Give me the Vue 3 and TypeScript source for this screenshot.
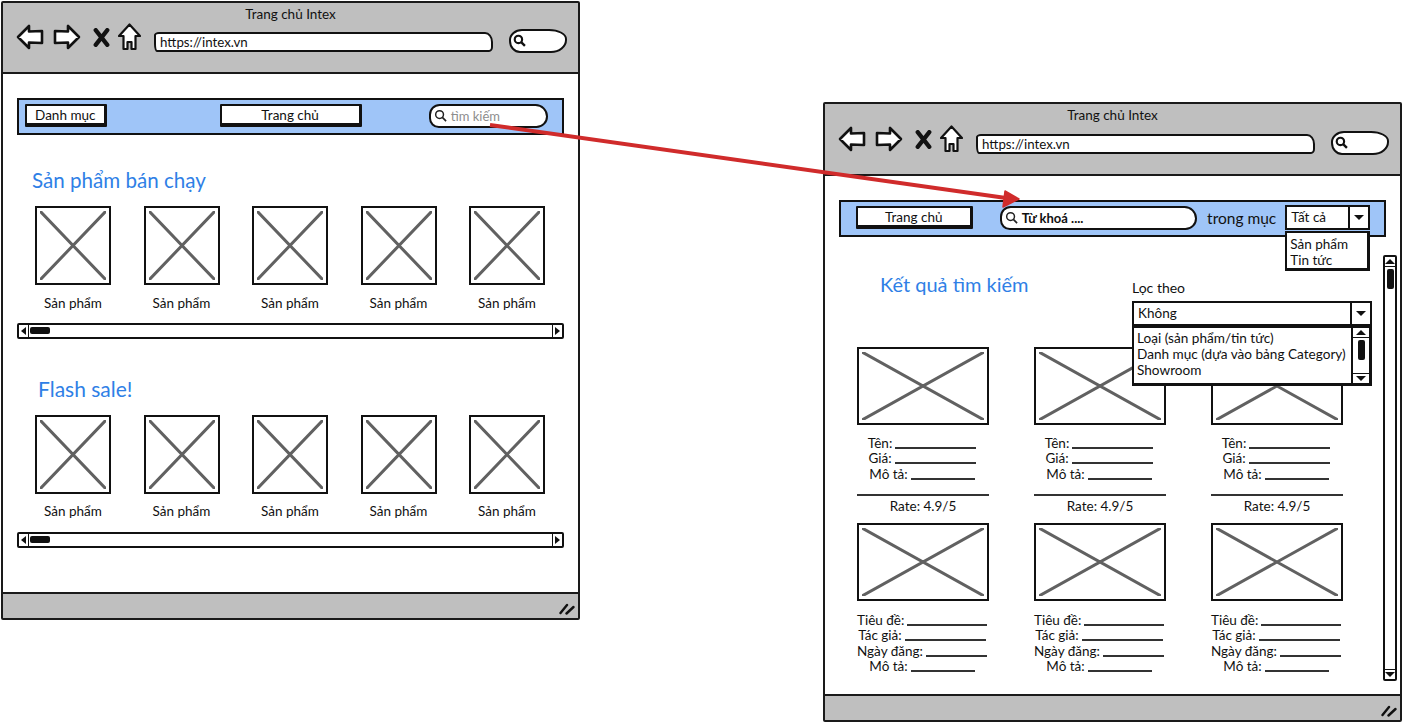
<script setup lang="ts">
interface Field {
  label: string;
  line: number;
}

const windows = [
  { id: "home", title: "Trang chủ Intex" },
  { id: "results", title: "Trang chủ Intex" },
];

const sections = [
  { title: "Sản phẩm bán chạy", kind: "best" },
  { title: "Flash sale!", kind: "flash" },
];

const productFields: Field[] = [
  { label: "Tên:", line: 81 },
  { label: "Giá:", line: 81 },
  { label: "Mô tả:", line: 64 },
];

const newsFields: Field[] = [
  { label: "Tiêu đề:", line: 81 },
  { label: "Tác giả:", line: 81 },
  { label: "Ngày đăng:", line: 65 },
  { label: "Mô tả:", line: 64 },
];
</script>

<template>
  <div class="canvas">
    <section v-for="win in windows" :key="win.id" class="window" :class="`window-${win.id}`">
      <header class="titlebar">
        <div class="win-title">{{ win.title }}</div>
        <div class="toolbar">
          <svg class="tool tool-arrow" viewBox="0 0 28 26">
            <path d="M2 13 L13 2 L13 7.5 L26 7 L26 19 L13 18.5 L13 24 Z" fill="#fff" stroke="#111" stroke-width="2.6" stroke-linejoin="round" />
          </svg>
          <svg class="tool tool-arrow" viewBox="0 0 28 26">
            <path d="M26 13 L15 2 L15 7.5 L2 7 L2 19 L15 18.5 L15 24 Z" fill="#fff" stroke="#111" stroke-width="2.6" stroke-linejoin="round" />
          </svg>
          <svg class="tool tool-x" viewBox="0 0 16 18">
            <path d="M2.5 2 L13.5 16 M13.5 2 L2.5 16" fill="none" stroke="#111" stroke-width="4" stroke-linecap="round" />
          </svg>
          <svg class="tool tool-home" viewBox="0 0 23 28">
            <path d="M11.5 1.5 L22 13 L17.5 13 L17.5 26 L13.5 26 L13.5 19 L9.5 19 L9.5 26 L5.5 26 L5.5 13 L1 13 Z" fill="#fff" stroke="#111" stroke-width="2.2" stroke-linejoin="round" />
          </svg>
          <div class="url">https://intex.vn</div>
          <div class="mini-search">
            <svg viewBox="0 0 12 12">
              <circle cx="5" cy="5" r="3.4" fill="none" stroke="#111" stroke-width="2" />
              <path d="M7.5 7.5 L11 11" stroke="#111" stroke-width="2.2" />
            </svg>
          </div>
        </div>
      </header>

      <main v-if="win.id === 'home'" class="content">
        <nav class="navbar">
          <button class="btn btn-menu">Danh mục</button>
          <button class="btn btn-home">Trang chủ</button>
          <div class="search search-home">
            <svg class="lens" viewBox="0 0 14 14">
              <circle cx="6" cy="6" r="4.2" fill="none" stroke="#222" stroke-width="1.6" />
              <path d="M9 9 L13 13" stroke="#222" stroke-width="1.8" />
            </svg>
            <span class="placeholder-text">tìm kiếm</span>
          </div>
        </nav>

        <div v-for="sec in sections" :key="sec.kind" class="shelf" :class="`shelf-${sec.kind}`">
          <h2 class="heading">{{ sec.title }}</h2>
          <div class="products">
            <div v-for="n in 5" :key="n" class="product">
              <div class="thumb">
                <svg viewBox="0 0 100 100" preserveAspectRatio="none">
                  <path d="M0 0 L100 100 M100 0 L0 100" stroke="#616161" stroke-width="3" vector-effect="non-scaling-stroke" />
                </svg>
              </div>
              <div class="product-name">Sản phẩm</div>
            </div>
          </div>
          <div class="hscroll">
            <span class="hscroll-btn"><i class="tri tri-left"></i></span>
            <span class="hscroll-track"><i class="hscroll-thumb"></i></span>
            <span class="hscroll-btn hscroll-btn-end"><i class="tri tri-right"></i></span>
          </div>
        </div>
      </main>

      <main v-else class="content">
        <nav class="navbar navbar-results">
          <button class="btn btn-home-small">Trang chủ</button>
          <div class="search search-wide">
            <svg class="lens" viewBox="0 0 14 14">
              <circle cx="6" cy="6" r="4.2" fill="none" stroke="#222" stroke-width="1.6" />
              <path d="M9 9 L13 13" stroke="#222" stroke-width="1.8" />
            </svg>
            <b>Từ khoá ....</b>
          </div>
          <span class="scope-label">trong mục</span>
          <div class="select select-scope">
            <span class="select-value">Tất cả</span>
            <span class="select-arrow"><i class="tri tri-down"></i></span>
            <ul class="menu menu-scope">
              <li>Sản phẩm</li>
              <li>Tin tức</li>
            </ul>
          </div>
        </nav>

        <div class="results">
          <div class="results-main">
            <div class="results-head">
              <h2 class="heading heading-results">Kết quả tìm kiếm</h2>
              <div class="filter">
                <div class="filter-label">Lọc theo</div>
                <div class="select select-filter">
                  <span class="select-value">Không</span>
                  <span class="select-arrow"><i class="tri tri-down"></i></span>
                  <div class="menu menu-filter">
                    <ul>
                      <li>Loại (sản phẩm/tin tức)</li>
                      <li>Danh mục (dựa vào bảng Category)</li>
                      <li>Showroom</li>
                    </ul>
                    <div class="vscroll vscroll-mini">
                      <span class="vscroll-btn"><i class="tri tri-up"></i></span>
                      <span class="vscroll-track"><i class="vscroll-thumb"></i></span>
                      <span class="vscroll-btn"><i class="tri tri-down"></i></span>
                    </div>
                  </div>
                </div>
              </div>
            </div>

            <div class="cards">
              <article v-for="n in 3" :key="n" class="card">
                <div class="thumb thumb-wide">
                  <svg viewBox="0 0 100 100" preserveAspectRatio="none">
                    <path d="M0 0 L100 100 M100 0 L0 100" stroke="#616161" stroke-width="3" vector-effect="non-scaling-stroke" />
                  </svg>
                </div>
                <div class="fields">
                  <div v-for="f in productFields" :key="f.label" class="field">
                    {{ f.label }} <span class="blank" :style="{ width: f.line + 'px' }"></span>
                  </div>
                </div>
                <div class="rate">Rate: 4.9/5</div>
              </article>
              <article v-for="n in 3" :key="'news' + n" class="card card-news">
                <div class="thumb thumb-wide">
                  <svg viewBox="0 0 100 100" preserveAspectRatio="none">
                    <path d="M0 0 L100 100 M100 0 L0 100" stroke="#616161" stroke-width="3" vector-effect="non-scaling-stroke" />
                  </svg>
                </div>
                <div class="fields">
                  <div v-for="f in newsFields" :key="f.label" class="field">
                    {{ f.label }} <span class="blank" :style="{ width: f.line + 'px' }"></span>
                  </div>
                </div>
              </article>
            </div>
          </div>

          <div class="vscroll vscroll-page">
            <span class="vscroll-btn"><i class="tri tri-up"></i></span>
            <span class="vscroll-track"><i class="vscroll-thumb"></i></span>
            <span class="vscroll-btn"><i class="tri tri-down"></i></span>
          </div>
        </div>
      </main>

      <footer class="statusbar">
        <svg class="grip" viewBox="0 0 16 12">
          <path d="M1.5 10 L8 2 M7.5 10.5 L14.5 4" stroke="#111" stroke-width="2.4" stroke-linecap="round" />
        </svg>
      </footer>
    </section>

    <svg class="link-arrow" viewBox="0 0 1403 723">
      <path d="M490 125 L1006 198" fill="none" stroke="#d02b2b" stroke-width="4" />
      <path d="M1019 199 L1005 191 L1003 207 Z" fill="#d02b2b" stroke="#d02b2b" stroke-width="1.5" stroke-linejoin="round" />
    </svg>
  </div>
</template>

<style>
html,
body {
  background: #fff;
}
</style>

<style scoped>
.canvas {
  position: relative;
  width: 1403px;
  height: 723px;
  overflow: hidden;
  background: #fff;
  color: #111;
  font-family: Lato, "Noto Sans", sans-serif;
  font-size: 13.5px;
}

.window {
  position: absolute;
  width: 579px;
  height: 619px;
  box-sizing: border-box;
  display: flex;
  flex-direction: column;
  border: 2px solid #1a1a1a;
  border-radius: 2px;
  background: #fff;
}

.window-home {
  left: 1px;
  top: 1px;
}

.window-results {
  left: 823px;
  top: 102px;
  height: 620px;
}

.titlebar {
  height: 71px;
  flex-shrink: 0;
  box-sizing: border-box;
  background: #bfbfbf;
  border-bottom: 2px solid #1a1a1a;
}

.window-results .titlebar {
  height: 72px;
}

.win-title {
  text-align: center;
  font-size: 13.5px;
  line-height: 16px;
  padding-top: 3px;
}

.toolbar {
  display: flex;
  align-items: center;
  padding-left: 13px;
  height: 30px;
}

.window-results .toolbar {
  margin-top: 1px;
}

.tool {
  display: block;
  flex-shrink: 0;
}

.tool-arrow {
  width: 28px;
  height: 26px;
  margin-right: 9px;
}

.tool-x {
  width: 17px;
  height: 19px;
  margin: 0 8px 0 3px;
}

.tool-home {
  width: 23px;
  height: 28px;
}

.url {
  width: 339px;
  height: 20px;
  box-sizing: border-box;
  margin: 10px 0 0 13px;
  padding-left: 4px;
  background: #fff;
  border: 2px solid #111;
  border-radius: 5px 8px 4px 3px / 3px 10px 5px 8px;
  font-size: 13.3px;
  line-height: 16px;
}

.mini-search {
  width: 58px;
  height: 24px;
  box-sizing: border-box;
  margin: 8px 0 0 16px;
  padding: 3px 0 0 2px;
  background: #fff;
  border: 2px solid #111;
  border-radius: 13px 18px 16px 11px / 11px 10px 13px 12px;
}

.mini-search svg {
  display: block;
  width: 13px;
  height: 13px;
}

.content {
  flex: 1;
  min-height: 0;
  background: #fff;
}

.navbar {
  display: flex;
  align-items: center;
  height: 37px;
  box-sizing: border-box;
  margin: 24px 14px 0;
  padding: 0 14px 2px 6px;
  background: #9fc5f8;
  border: 2px solid #111;
}

.navbar-results {
  padding-left: 15px;
}

.btn {
  display: block;
  height: 23px;
  padding: 0;
  background: #fff;
  border: 2px solid #111;
  border-right-width: 3px;
  border-bottom-width: 4px;
  border-radius: 1px;
  color: #111;
  font: inherit;
  font-size: 13.5px;
  line-height: 16px;
  text-align: center;
}

.btn-menu {
  width: 82px;
}

.btn-home {
  width: 143px;
  margin-left: 113px;
}

.btn-home-small {
  width: 117px;
}

.search {
  display: flex;
  align-items: center;
  gap: 4px;
  height: 24px;
  box-sizing: border-box;
  padding-left: 3px;
  background: #fff;
  border: 2px solid #111;
  border-radius: 12px 14px 13px 11px;
}

.search-home {
  width: 120px;
  margin-left: 67px;
}

.search-wide {
  width: 198px;
  margin-left: 27px;
}

.lens {
  display: block;
  width: 13px;
  height: 13px;
}

.placeholder-text {
  color: #8d8d8d;
  font-size: 13px;
}

.search-wide b {
  font-size: 13px;
  font-weight: 700;
}

.scope-label {
  margin-left: 10px;
  font-size: 15.5px;
  white-space: nowrap;
}

.select {
  position: relative;
  display: flex;
  box-sizing: border-box;
  background: #fff;
  border: 2px solid #111;
}

.select-scope {
  width: 85px;
  height: 25px;
  margin-left: 9px;
}

.select-value {
  flex: 1;
  padding-left: 4px;
  line-height: 20px;
}

.select-arrow {
  width: 18px;
  display: flex;
  align-items: center;
  justify-content: center;
  border-left: 2px solid #111;
}

.tri {
  display: block;
  width: 0;
  height: 0;
  border-style: solid;
  border-color: transparent;
}

.tri-down {
  border-width: 5px 5px 0;
  border-top-color: #111;
}

.tri-up {
  border-width: 0 5px 5px;
  border-bottom-color: #111;
}

.tri-left {
  border-width: 4px 5px 4px 0;
  border-right-color: #111;
}

.tri-right {
  border-width: 4px 0 4px 5px;
  border-left-color: #111;
}

.menu {
  position: absolute;
  z-index: 2;
  left: -2px;
  right: -2px;
  top: 100%;
  box-sizing: border-box;
  margin: 3px 0 0;
  padding: 0;
  list-style: none;
  background: #fff;
  border: 2px solid #111;
  border-width: 2px 3px 3px 2px;
}

.menu-scope {
  height: 40px;
  padding: 3px 0 0 3px;
  line-height: 16px;
}

.menu-filter {
  display: flex;
  height: 60px;
  margin-top: 2px;
}

.menu-filter ul {
  flex: 1;
  margin: 0;
  padding: 2px 0 0 3px;
  list-style: none;
  font-size: 13.6px;
  line-height: 16px;
  white-space: nowrap;
}

.shelf {
  margin-top: 33px;
}

.shelf-flash {
  margin-top: 38px;
}

.heading {
  margin: 0;
  padding-left: 29px;
  color: #2f7fe6;
  font-size: 20.6px;
  font-weight: 400;
  line-height: 24px;
}

.shelf-flash .heading {
  padding-left: 35px;
  font-size: 21px;
}

.products {
  display: flex;
  justify-content: space-between;
  margin: 14px 0 0;
  padding: 0 33px 0 32px;
}

.product {
  width: 76px;
}

.thumb {
  height: 79px;
  box-sizing: border-box;
  padding: 3px;
  background: #fff;
  border: 2px solid #111;
}

.thumb svg {
  display: block;
  width: 100%;
  height: 100%;
}

.product-name {
  margin-top: 10px;
  text-align: center;
  white-space: nowrap;
  line-height: 16px;
}

.shelf-flash .product-name {
  margin-top: 9px;
}

.hscroll {
  display: flex;
  height: 16px;
  margin: 12px 14px 0;
  box-sizing: border-box;
  border: 2px solid #111;
  border-radius: 2px;
  background: #fff;
}

.shelf-flash .hscroll {
  margin-top: 13px;
}

.hscroll-btn {
  width: 9px;
  display: flex;
  align-items: center;
  justify-content: center;
  border-right: 1.5px solid #111;
}

.hscroll-btn-end {
  border-right: 0;
  border-left: 1.5px solid #111;
}

.hscroll-track {
  flex: 1;
  padding: 2px 1px;
}

.hscroll-thumb {
  display: block;
  width: 20px;
  height: 7px;
  background: #111;
  border-radius: 2px;
}

.results {
  display: flex;
  height: 477px;
  position: relative;
}

.results-main {
  flex: 1;
  min-width: 0;
}

.results-head {
  display: flex;
  justify-content: space-between;
  height: 110px;
  padding: 35px 11px 0 55px;
  box-sizing: border-box;
}

.heading-results {
  padding: 0;
  font-size: 20px;
}

.filter {
  width: 240px;
  margin-top: 8px;
}

.filter-label {
  font-size: 14px;
  line-height: 16px;
}

.select-filter {
  height: 25px;
  margin-top: 5px;
}

.cards {
  display: grid;
  grid-template-columns: repeat(3, 132px);
  column-gap: 45px;
  padding-left: 32px;
}

.thumb-wide {
  height: 78px;
}

.card {
  height: 176px;
}

.fields {
  margin-top: 10px;
  padding-right: 2px;
}

.card-news .fields {
  margin-top: 11px;
}

.field {
  display: flex;
  align-items: flex-end;
  justify-content: center;
  gap: 3px;
  height: 15.6px;
  line-height: 15px;
  white-space: nowrap;
}

.blank {
  display: block;
  height: 2px;
  margin-bottom: 2px;
  background: #333;
}

.rate {
  margin-top: 12px;
  padding-top: 2px;
  border-top: 2px solid #333;
  text-align: center;
  line-height: 16px;
}

.vscroll {
  display: flex;
  flex-direction: column;
  box-sizing: border-box;
  background: #fff;
}

.vscroll-page {
  width: 14px;
  height: 426px;
  margin: 18px 3px 0 0;
  border: 2px solid #111;
  border-radius: 2px;
}

.vscroll-mini {
  width: 18px;
  border-left: 2px solid #111;
}

.vscroll-btn {
  height: 9px;
  display: flex;
  align-items: center;
  justify-content: center;
  flex-shrink: 0;
}

.vscroll-btn:first-child {
  border-bottom: 1.5px solid #111;
}

.vscroll-btn:last-child {
  border-top: 1.5px solid #111;
}

.vscroll-track {
  flex: 1;
  padding: 2px;
}

.vscroll-thumb {
  display: block;
  width: 7px;
  height: 20px;
  margin: 0 auto;
  background: #111;
  border-radius: 2px;
}

.statusbar {
  height: 26px;
  flex-shrink: 0;
  box-sizing: border-box;
  display: flex;
  align-items: center;
  justify-content: flex-end;
  padding-right: 3px;
  background: #bfbfbf;
  border-top: 2px solid #1a1a1a;
}

.grip {
  display: block;
  width: 16px;
  height: 12px;
  margin-top: 5px;
}

.link-arrow {
  position: absolute;
  z-index: 3;
  inset: 0;
  width: 1403px;
  height: 723px;
  pointer-events: none;
}
</style>
